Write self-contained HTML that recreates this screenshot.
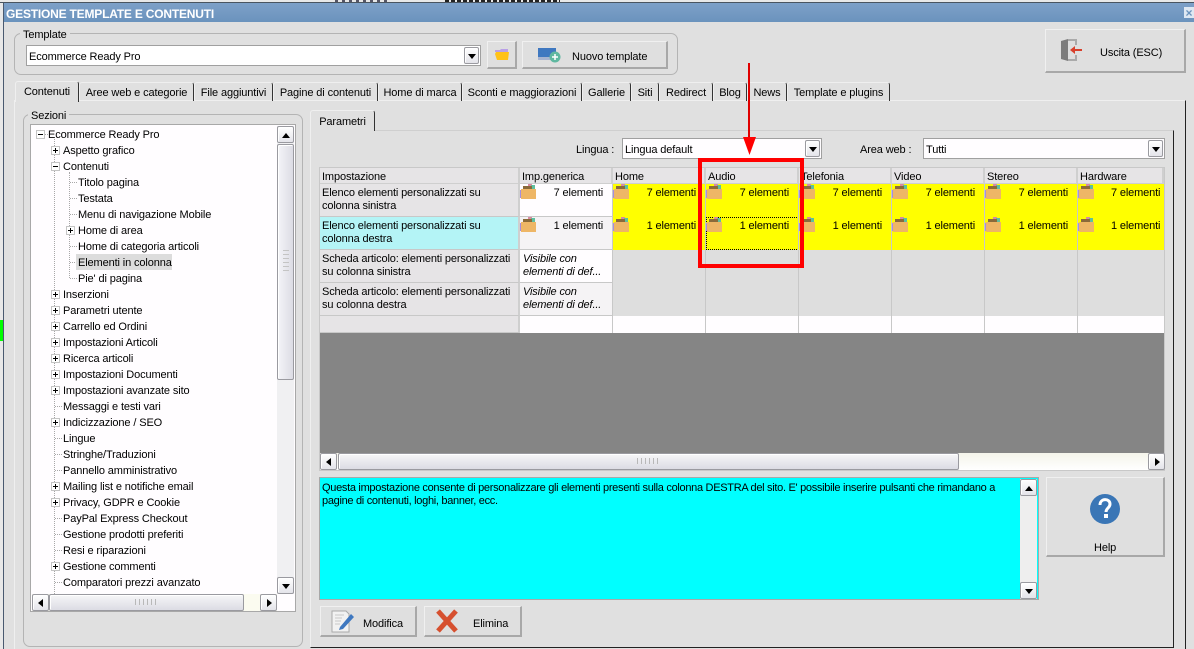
<!DOCTYPE html>
<html><head><meta charset="utf-8"><style>
html,body{margin:0;padding:0;height:649px;overflow:hidden}
body{width:1194px;height:649px;overflow:hidden;position:relative;background:#e0e0e0;font:11px/16px "Liberation Sans",sans-serif;color:#000;letter-spacing:-.12px}
div,svg,span.a{position:absolute;box-sizing:border-box}
.t{position:absolute;white-space:nowrap;margin-top:1px}
.g{border:1px solid #b4b4b4;border-radius:7px}
.leg{position:absolute;background:#e0e0e0;padding:0 3px;white-space:nowrap;margin-top:1px}
.btn{background:#dfdfdf;border-style:solid;border-width:1px 2px 2px 1px;border-color:#f0f0f0 #a8a8a8 #a8a8a8 #f0f0f0}
.sb{background:linear-gradient(#fff,#e4e4ea);border:1px solid #9a9aa0;border-radius:2px;box-shadow:inset 1px 1px 0 #fff}
.tab{position:absolute;top:82px;height:19px;border-top:1px solid #efefef;border-left:1px solid #efefef;border-right:1px solid #333;border-radius:3px 3px 0 0;text-align:center;line-height:19px;white-space:nowrap;padding-top:1px}
.up{width:0;height:0;border:4px solid transparent;border-top:0;border-bottom:5px solid #000;left:4px;top:6px}
.dn{width:0;height:0;border:4px solid transparent;border-bottom:0;border-top:5px solid #000;left:4px;top:6px}
.lf{width:0;height:0;border:4px solid transparent;border-left:0;border-right:5px solid #000;left:5px;top:4px}
.rt{width:0;height:0;border:4px solid transparent;border-right:0;border-left:5px solid #000;left:6px;top:4px}
.c{position:absolute;height:33px;border-right:1px solid #c8c8c8;border-bottom:1px solid #c8c8c8;line-height:13px;white-space:nowrap;letter-spacing:-.14px}
.h{position:absolute;top:168px;height:16px;background:#e6e4e6;border-right:2px solid #cfcfcf;padding:1px 0 0 2px;line-height:16px;white-space:nowrap;border-bottom:1px solid #cfcfcf}
.y{background:#ff0}
.n{position:absolute;right:9px;top:2px;margin-top:1px}
.y .n{right:10px}
.f{left:0;top:0;width:16px;height:15px}
.tr{position:absolute;white-space:nowrap;margin-top:1px}
.pm{position:absolute;width:9px;height:9px;border:1px solid #c4c4c4;background:#fff}
.pm:before{content:"";position:absolute;left:1px;top:3px;width:5px;height:1px;background:#000}
.pl:after{content:"";position:absolute;left:3px;top:1px;width:1px;height:5px;background:#000}
.dh{position:absolute;height:0;border-top:1px dotted #a8a8a8}
.dv{position:absolute;width:0;border-left:1px dotted #a8a8a8}
.vl{position:absolute;top:184px;width:1px;height:149px;background:#c8c8c8}
</style></head><body>
<svg width="0" height="0" style="position:absolute"><defs><g id="box"><rect x="8" y="0" width="4" height="3" fill="#d98aa0"/><rect x="11" y="1" width="4" height="4" fill="#5fbf9f"/><rect x="3" y="2" width="9" height="3" fill="#8a6a3a"/><path d="M1 5h15v10H1z" fill="#eeb666"/><path d="M0 6h1v8H0z" fill="#a58ee0"/></g></defs></svg>

<!-- top strip -->
<div style="left:0;top:0;width:1194px;height:3px;background:#e8e8e8"></div>
<div style="left:335px;top:0;width:55px;height:2px;background:repeating-linear-gradient(90deg,#556 0 3px,transparent 3px 7px)"></div>
<div style="left:445px;top:0;width:115px;height:2px;background:repeating-linear-gradient(90deg,#222 0 4px,transparent 4px 6px)"></div>
<div style="left:0;top:2px;width:1194px;height:1px;background:#4a5560"></div>
<div style="left:0;top:3px;width:4px;height:646px;background:#e8e8e8;border-right:1px solid #4a5a70"></div>
<div style="left:0;top:320px;width:3px;height:21px;background:#0f0"></div>
<div style="left:4px;top:3px;width:1190px;height:19px;background:linear-gradient(#7da0c8,#6b93bd)"></div>
<div class="t" style="left:6px;top:5px;color:#fff;font-weight:bold;font-size:12px;letter-spacing:-.2px">GESTIONE TEMPLATE E CONTENUTI</div>
<div style="left:1184px;top:7px;width:10px;height:11px;background:#dfe8f2"></div>
<div class="t" style="left:1184px;top:4px;width:10px;text-align:center;font:bold 12px/16px 'Liberation Sans',sans-serif;color:#6b93bd">×</div>

<!-- template group -->
<div class="g" style="left:14px;top:33px;width:664px;height:42px"></div>
<div class="leg" style="left:20px;top:26px">Template</div>
<div style="left:26px;top:45px;width:455px;height:21px;background:#fff;border:1px solid #a0a0a0"></div>
<div class="t" style="left:29px;top:48px">Ecommerce Ready Pro (</div>
<div style="left:142px;top:47px;width:300px;height:17px;background:#fff"></div>
<div class="sb" style="left:464px;top:47px;width:15px;height:17px"><div class="dn" style="left:3px"></div></div>
<div class="btn" style="left:487px;top:41px;width:30px;height:28px"></div>
<svg style="left:494px;top:47px" width="16" height="14"><path d="M1 3h5l1-1h7v3H1z" fill="#b9a0e8"/><path d="M2 5h13l-1 8H3L1 7z" fill="#ffc21a"/></svg>
<div class="btn" style="left:522px;top:41px;width:146px;height:28px"></div>
<svg style="left:537px;top:47px" width="24" height="16"><rect x="1" y="1" width="18" height="9" fill="#3f78c0"/><rect x="1" y="10" width="18" height="3" fill="#a8b4d0"/><circle cx="18" cy="10" r="5.500" fill="#5fb8a0"/><path d="M15 10h6M18 7v6" stroke="#fff" stroke-width="1.500"/></svg>
<div class="t" style="left:572px;top:48px">Nuovo template</div>

<div class="btn" style="left:1045px;top:29px;width:141px;height:44px"></div>
<svg style="left:1060px;top:38px" width="24" height="24"><path d="M1 3l7-2v22l-7-2z" fill="#7d7d7d"/><path d="M8 2h8v5M8 22h8v-5" fill="none" stroke="#aaa" stroke-width="2"/><path d="M10 12l5-4v3h7v2h-7v3z" fill="#d8402c"/></svg>
<div class="t" style="left:1100px;top:44px">Uscita (ESC)</div>

<!-- main page -->
<div style="left:14px;top:100px;width:1172px;height:549px;border-top:1px solid #efefef;border-right:1px solid #222;border-left:1px solid #efefef"></div>
<div class="tab" style="left:15px;top:81px;width:64px;height:21px;background:#e0e0e0;z-index:2">Contenuti</div>
<div class="tab" style="left:79px;width:115px">Aree web e categorie</div>
<div class="tab" style="left:194px;width:79px">File aggiuntivi</div>
<div class="tab" style="left:273px;width:105px">Pagine di contenuti</div>
<div class="tab" style="left:378px;width:84px">Home di marca</div>
<div class="tab" style="left:462px;width:120px">Sconti e maggiorazioni</div>
<div class="tab" style="left:582px;width:49px">Gallerie</div>
<div class="tab" style="left:631px;width:28px">Siti</div>
<div class="tab" style="left:659px;width:54px">Redirect</div>
<div class="tab" style="left:713px;width:34px">Blog</div>
<div class="tab" style="left:747px;width:40px">News</div>
<div class="tab" style="left:787px;width:103px">Template e plugins</div>

<!-- sections -->
<div class="g" style="left:23px;top:114px;width:280px;height:533px"></div>
<div class="leg" style="left:28px;top:107px">Sezioni</div>
<div style="left:30px;top:124px;width:266px;height:488px;background:#fffdff;border:1px solid #a8a8a8"></div>
<div class="dv" style="left:54px;top:139px;height:455px"></div>
<div class="dv" style="left:69px;top:172px;height:106px"></div>
<div class="dh" style="left:40px;top:134px;width:8px"></div>
<div class="dh" style="left:70px;top:182px;width:7px"></div>
<div class="dh" style="left:70px;top:198px;width:7px"></div>
<div class="dh" style="left:70px;top:214px;width:7px"></div>
<div class="dh" style="left:70px;top:246px;width:7px"></div>
<div class="dh" style="left:70px;top:262px;width:7px"></div>
<div class="dh" style="left:70px;top:278px;width:7px"></div>
<div class="dh" style="left:55px;top:406px;width:7px"></div>
<div class="dh" style="left:55px;top:438px;width:7px"></div>
<div class="dh" style="left:55px;top:454px;width:7px"></div>
<div class="dh" style="left:55px;top:470px;width:7px"></div>
<div class="dh" style="left:55px;top:518px;width:7px"></div>
<div class="dh" style="left:55px;top:534px;width:7px"></div>
<div class="dh" style="left:55px;top:550px;width:7px"></div>
<div class="dh" style="left:55px;top:582px;width:7px"></div>
<div style="left:76px;top:254px;width:96px;height:16px;background:#dcdcdc"></div>

<div class="tr" style="left:48px;top:126px">Ecommerce Ready Pro</div>
<div class="tr" style="left:63px;top:142px">Aspetto grafico</div>
<div class="tr" style="left:63px;top:158px">Contenuti</div>
<div class="tr" style="left:78px;top:174px">Titolo pagina</div>
<div class="tr" style="left:78px;top:190px">Testata</div>
<div class="tr" style="left:78px;top:206px">Menu di navigazione Mobile</div>
<div class="tr" style="left:78px;top:222px">Home di area</div>
<div class="tr" style="left:78px;top:238px">Home di categoria articoli</div>
<div class="tr" style="left:78px;top:254px">Elementi in colonna</div>
<div class="tr" style="left:78px;top:270px">Pie' di pagina</div>
<div class="tr" style="left:63px;top:286px">Inserzioni</div>
<div class="tr" style="left:63px;top:302px">Parametri utente</div>
<div class="tr" style="left:63px;top:318px">Carrello ed Ordini</div>
<div class="tr" style="left:63px;top:334px">Impostazioni Articoli</div>
<div class="tr" style="left:63px;top:350px">Ricerca articoli</div>
<div class="tr" style="left:63px;top:366px">Impostazioni Documenti</div>
<div class="tr" style="left:63px;top:382px">Impostazioni avanzate sito</div>
<div class="tr" style="left:63px;top:398px">Messaggi e testi vari</div>
<div class="tr" style="left:63px;top:414px">Indicizzazione / SEO</div>
<div class="tr" style="left:63px;top:430px">Lingue</div>
<div class="tr" style="left:63px;top:446px">Stringhe/Traduzioni</div>
<div class="tr" style="left:63px;top:462px">Pannello amministrativo</div>
<div class="tr" style="left:63px;top:478px">Mailing list e notifiche email</div>
<div class="tr" style="left:63px;top:494px">Privacy, GDPR e Cookie</div>
<div class="tr" style="left:63px;top:510px">PayPal Express Checkout</div>
<div class="tr" style="left:63px;top:526px">Gestione prodotti preferiti</div>
<div class="tr" style="left:63px;top:542px">Resi e riparazioni</div>
<div class="tr" style="left:63px;top:558px">Gestione commenti</div>
<div class="tr" style="left:63px;top:574px">Comparatori prezzi avanzato</div>

<div class="pm" style="left:36px;top:130px"></div>
<div class="pm pl" style="left:51px;top:146px"></div>
<div class="pm" style="left:51px;top:162px"></div>
<div class="pm pl" style="left:66px;top:226px"></div>
<div class="pm pl" style="left:51px;top:290px"></div>
<div class="pm pl" style="left:51px;top:306px"></div>
<div class="pm pl" style="left:51px;top:322px"></div>
<div class="pm pl" style="left:51px;top:338px"></div>
<div class="pm pl" style="left:51px;top:354px"></div>
<div class="pm pl" style="left:51px;top:370px"></div>
<div class="pm pl" style="left:51px;top:386px"></div>
<div class="pm pl" style="left:51px;top:418px"></div>
<div class="pm pl" style="left:51px;top:482px"></div>
<div class="pm pl" style="left:51px;top:498px"></div>
<div class="pm pl" style="left:51px;top:562px"></div>

<div style="left:277px;top:126px;width:17px;height:468px;background:#f0f0f2"></div>
<div class="sb" style="left:277px;top:126px;width:17px;height:17px"><div class="up"></div></div>
<div class="sb" style="left:277px;top:144px;width:17px;height:236px;background:linear-gradient(90deg,#f4f4f8,#dcdce4)"></div>
<div style="left:283px;top:250px;width:6px;height:23px;background:repeating-linear-gradient(#c4c4c4 0 1px,transparent 1px 4px)"></div>
<div class="sb" style="left:277px;top:577px;width:17px;height:17px"><div class="dn"></div></div>
<div style="left:32px;top:594px;width:245px;height:17px;background:#fbfbf0"></div>
<div class="sb" style="left:32px;top:594px;width:17px;height:17px"><div class="lf"></div></div>
<div class="sb" style="left:49px;top:594px;width:195px;height:17px;background:linear-gradient(#f6f6f8,#dcdce4)"></div>
<div class="sb" style="left:260px;top:594px;width:17px;height:17px"><div class="rt"></div></div>
<div style="left:135px;top:599px;width:23px;height:6px;background:repeating-linear-gradient(90deg,#b8b8b8 0 1px,transparent 1px 4px)"></div>

<!-- parametri -->
<div style="left:310px;top:130px;width:864px;height:518px;border-top:1px solid #cfcfcf;border-left:1px solid #efefef;border-right:1px solid #222;border-bottom:1px solid #222"></div>
<div class="tab" style="left:310px;top:110px;width:65px;height:21px;background:#e0e0e0;padding-top:2px">Parametri</div>

<div class="t" style="left:576px;top:141px">Lingua :</div>
<div style="left:622px;top:138px;width:200px;height:21px;background:#fffdff;border:1px solid #a0a0a0"></div>
<div class="t" style="left:625px;top:141px">Lingua default</div>
<div class="sb" style="left:805px;top:140px;width:15px;height:17px"><div class="dn" style="left:3px"></div></div>
<div class="t" style="left:860px;top:141px">Area web :</div>
<div style="left:923px;top:138px;width:242px;height:21px;background:#fffdff;border:1px solid #a0a0a0"></div>
<div class="t" style="left:926px;top:141px">Tutti</div>
<div class="sb" style="left:1148px;top:140px;width:15px;height:17px"><div class="dn" style="left:3px"></div></div>

<!-- grid -->
<div style="left:319px;top:167px;width:846px;height:304px;background:#dedede;border:1px solid #c8c8c8;overflow:hidden"></div>
<div class="h" style="left:320px;width:200px">Impostazione</div>
<div class="h" style="left:520px;width:93px">Imp.generica</div>
<div class="h" style="left:613px;width:93px">Home</div>
<div class="h" style="left:706px;width:93px">Audio</div>
<div class="h" style="left:799px;width:93px">Telefonia</div>
<div class="h" style="left:892px;width:93px">Video</div>
<div class="h" style="left:985px;width:93px">Stereo</div>
<div class="h" style="left:1078px;width:86px">Hardware</div>

<div class="c" style="left:320px;top:184px;width:200px;background:#e6e4e6;padding:3px 0 0 2px;border-right:2px solid #cfcfcf">Elenco elementi personalizzati su<br>colonna sinistra</div>
<div class="c" style="left:320px;top:217px;width:200px;background:#b4f4f6;padding:3px 0 0 2px;border-right:2px solid #cfcfcf">Elenco elementi personalizzati su<br>colonna destra</div>
<div class="c" style="left:320px;top:250px;width:200px;background:#e6e4e6;padding:3px 0 0 2px;border-right:2px solid #cfcfcf">Scheda articolo: elementi personalizzati<br>su colonna sinistra</div>
<div class="c" style="left:320px;top:283px;width:200px;background:#e6e4e6;padding:3px 0 0 2px;border-right:2px solid #cfcfcf">Scheda articolo: elementi personalizzati<br>su colonna destra</div>
<div class="c" style="left:320px;top:316px;width:200px;height:17px;background:#e6e4e6;border-right:2px solid #cfcfcf"></div>

<div class="c" style="left:520px;top:184px;width:93px;background:#fffdff"><svg class="f"><use href="#box"/></svg><span class="n">7 elementi</span></div>
<div class="c" style="left:520px;top:217px;width:93px;background:#f5f3f5"><svg class="f"><use href="#box"/></svg><span class="n">1 elementi</span></div>
<div class="c" style="left:520px;top:250px;width:93px;background:#fffdff;padding:3px 0 0 3px;font-style:italic">Visibile con<br>elementi di def...</div>
<div class="c" style="left:520px;top:283px;width:93px;background:#f5f3f5;padding:3px 0 0 3px;font-style:italic">Visibile con<br>elementi di def...</div>

<div class="c y" style="left:613px;top:184px;width:93px;border:0"><svg class="f"><use href="#box"/></svg><span class="n">7 elementi</span></div>
<div class="c y" style="left:706px;top:184px;width:93px;border:0"><svg class="f"><use href="#box"/></svg><span class="n">7 elementi</span></div>
<div class="c y" style="left:799px;top:184px;width:93px;border:0"><svg class="f"><use href="#box"/></svg><span class="n">7 elementi</span></div>
<div class="c y" style="left:892px;top:184px;width:93px;border:0"><svg class="f"><use href="#box"/></svg><span class="n">7 elementi</span></div>
<div class="c y" style="left:985px;top:184px;width:93px;border:0"><svg class="f"><use href="#box"/></svg><span class="n">7 elementi</span></div>
<div class="c y" style="left:1078px;top:184px;width:86px;border:0;overflow:hidden"><svg class="f"><use href="#box"/></svg><span class="n" style="left:33px;right:auto">7 elementi</span></div>
<div class="c y" style="left:613px;top:217px;width:93px;border:0"><svg class="f"><use href="#box"/></svg><span class="n">1 elementi</span></div>
<div class="c y" style="left:706px;top:217px;width:93px;border:1px dotted #000"><svg class="f" style="left:-1px;top:-1px"><use href="#box"/></svg><span class="n" style="top:1px;right:9px">1 elementi</span></div>
<div class="c y" style="left:799px;top:217px;width:93px;border:0"><svg class="f"><use href="#box"/></svg><span class="n">1 elementi</span></div>
<div class="c y" style="left:892px;top:217px;width:93px;border:0"><svg class="f"><use href="#box"/></svg><span class="n">1 elementi</span></div>
<div class="c y" style="left:985px;top:217px;width:93px;border:0"><svg class="f"><use href="#box"/></svg><span class="n">1 elementi</span></div>
<div class="c y" style="left:1078px;top:217px;width:86px;border:0;overflow:hidden"><svg class="f"><use href="#box"/></svg><span class="n" style="left:33px;right:auto">1 elementi</span></div>

<div style="left:520px;top:316px;width:644px;height:17px;background:#fffdff"></div>
<div class="vl" style="left:612px"></div>
<div class="vl" style="left:705px"></div>
<div class="vl" style="left:798px"></div>
<div class="vl" style="left:891px"></div>
<div class="vl" style="left:984px"></div>
<div class="vl" style="left:1077px"></div>
<div style="left:320px;top:333px;width:844px;height:120px;background:#858585"></div>

<div style="left:320px;top:453px;width:844px;height:17px;background:linear-gradient(#f4f4ea,#fff)"></div>
<div class="sb" style="left:320px;top:453px;width:17px;height:17px"><div class="lf"></div></div>
<div class="sb" style="left:338px;top:453px;width:621px;height:17px;background:linear-gradient(#f6f6f8,#dcdce4)"></div>
<div class="sb" style="left:1148px;top:453px;width:17px;height:17px"><div class="rt"></div></div>
<div style="left:637px;top:458px;width:23px;height:6px;background:repeating-linear-gradient(90deg,#b8b8b8 0 1px,transparent 1px 4px)"></div>

<!-- description -->
<div style="left:319px;top:477px;width:720px;height:123px;background:#0ff;border:1px solid #a8a8a8"></div>
<div class="t" style="left:322px;top:479px;letter-spacing:-.3px">Questa impostazione consente di personalizzare gli elementi presenti sulla colonna DESTRA del sito. E' possibile inserire pulsanti che rimandano a</div>
<div class="t" style="left:322px;top:492px;letter-spacing:-.3px">pagine di contenuti, loghi, banner, ecc.</div>
<div style="left:1020px;top:479px;width:17px;height:120px;background:#eee"></div>
<div class="sb" style="left:1020px;top:479px;width:17px;height:17px"><div class="up"></div></div>
<div class="sb" style="left:1020px;top:582px;width:17px;height:17px"><div class="dn"></div></div>

<div class="btn" style="left:1046px;top:477px;width:119px;height:80px"></div>
<svg style="left:1090px;top:494px" width="30" height="30"><circle cx="15" cy="15" r="15" fill="#3a76b6"/><path d="M10 11c0-7 10-7 10-1 0 4-4 4-4 8" fill="none" stroke="#fff" stroke-width="3"/><rect x="14" y="20" width="4" height="4" fill="#fff"/></svg>
<div class="t" style="left:1094px;top:539px">Help</div>

<div class="btn" style="left:320px;top:606px;width:97px;height:31px"></div>
<svg style="left:331px;top:609px" width="24" height="24"><path d="M1 2h14l3 3v18H1z" fill="#f2f2f2" stroke="#aaa"/><path d="M4 6h9M4 9h7M4 12h6M4 15h5" stroke="#c8c8c8"/><path d="M9 18L20 5l3 3L12 20l-4 1z" fill="#3f78c0"/></svg>
<div class="t" style="left:363px;top:615px">Modifica</div>
<div class="btn" style="left:424px;top:606px;width:98px;height:31px"></div>
<svg style="left:435px;top:609px" width="24" height="24"><path d="M3 2l18 20M21 2L3 22" stroke="#d6502f" stroke-width="5"/></svg>
<div class="t" style="left:473px;top:615px">Elimina</div>

<!-- red annotation -->
<div style="left:698px;top:158px;width:106px;height:110px;border:4px solid #f00"></div>
<div style="left:748px;top:63px;width:2px;height:76px;background:#e00000"></div>
<svg style="left:743px;top:137px" width="13" height="18"><path d="M0 0h13L6.500 18z" fill="#f00"/></svg>
</body></html>
